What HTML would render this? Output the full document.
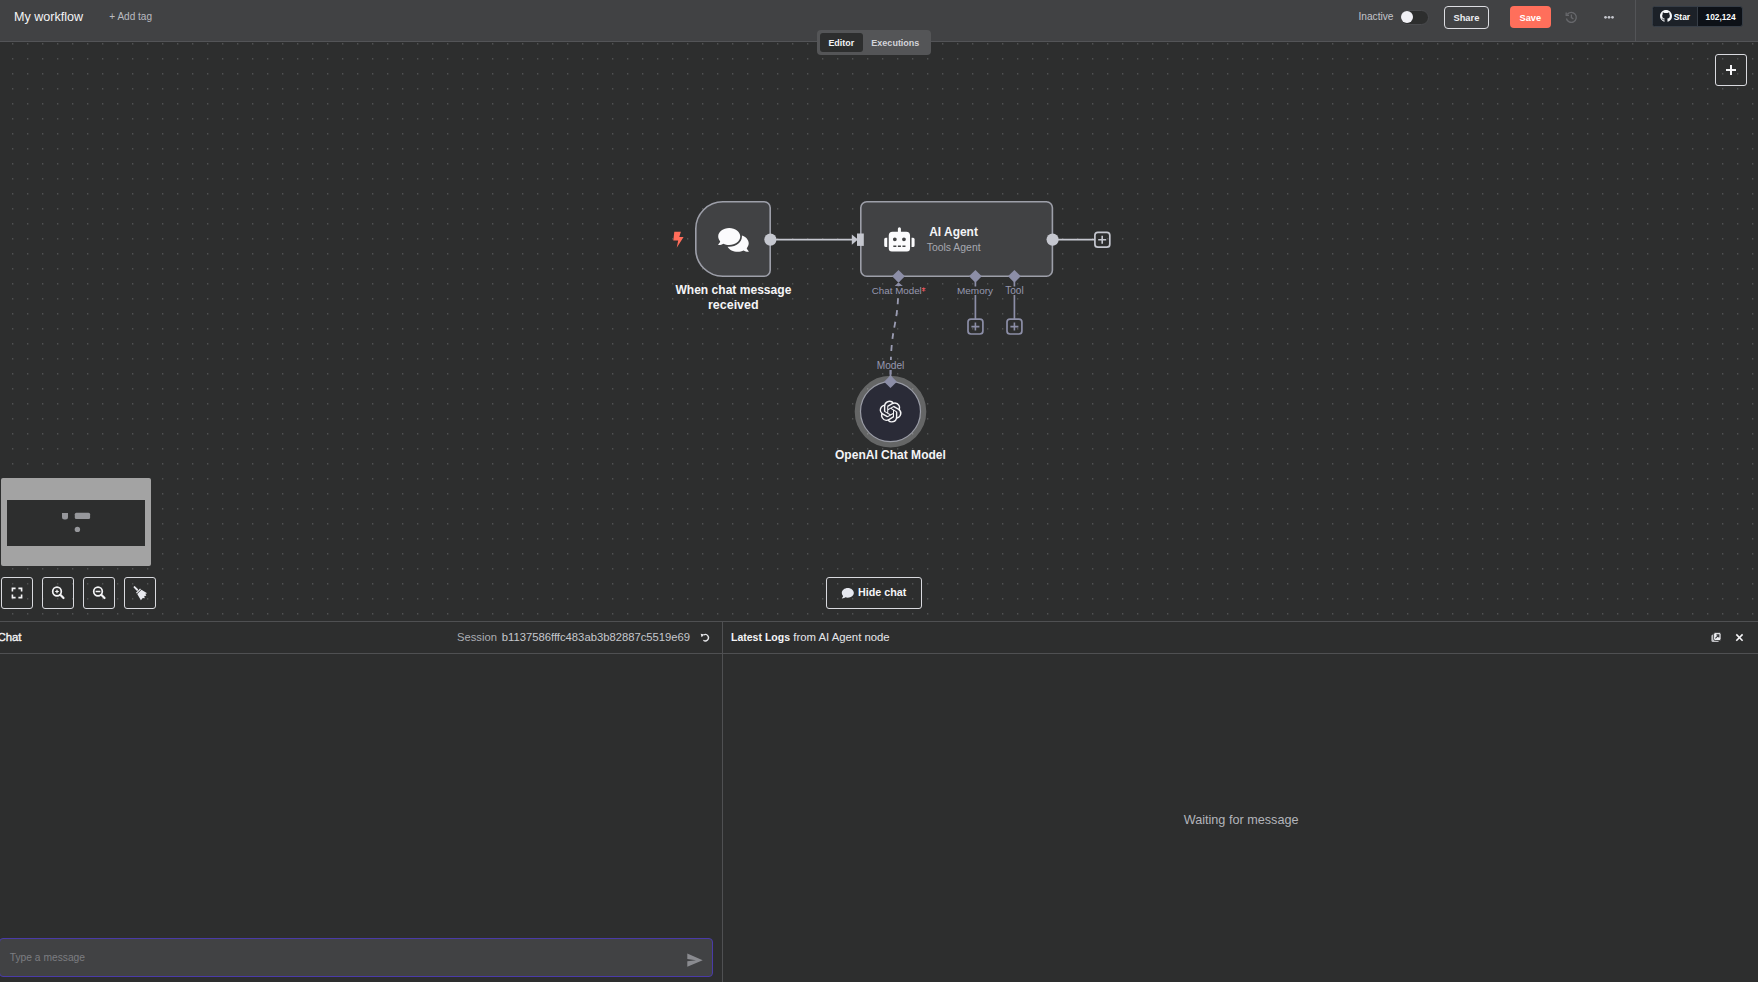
<!DOCTYPE html><html><head><meta charset="utf-8"><style>
html,body{margin:0;padding:0}
body{width:1758px;height:982px;overflow:hidden;position:relative;background:#2d2e2e;font-family:"Liberation Sans",sans-serif}
.t{position:absolute;white-space:pre}
.abs{position:absolute}
</style></head><body>
<svg class="abs" style="left:0;top:0" width="1758" height="982" viewBox="0 0 1758 982">
<defs><pattern id="dots" x="12" y="13" width="15" height="15" patternUnits="userSpaceOnUse"><rect x="0.05" y="0.2" width="1.25" height="1.25" fill="#5b5c5d"/></pattern></defs>
<rect x="0" y="42" width="1758" height="580" fill="url(#dots)"/>
<path d="M722.8,201.8 H764.2 A6,6 0 0 1 770.2,207.8 V270.2 A6,6 0 0 1 764.2,276.2 H722.8 A27,27 0 0 1 695.8,249.2 V228.8 A27,27 0 0 1 722.8,201.8 Z" fill="#414244" stroke="#9d9fa9" stroke-width="1.6"/>
<rect x="860.8" y="201.8" width="191.6" height="74.4" rx="6" ry="6" fill="#414244" stroke="#9d9fa9" stroke-width="1.6"/>
<line x1="776" y1="239.6" x2="853" y2="239.6" stroke="#c5c7cf" stroke-width="1.8"/>
<path d="M851.8,234.4 L858,239.6 L851.8,244.8 Z" fill="#c5c7cf"/>
<rect x="857" y="233.5" width="6.8" height="12.4" fill="#c5c7cf"/>
<circle cx="770.4" cy="239.6" r="6.1" fill="#c5c7cf"/>
<circle cx="1052.6" cy="239.6" r="6.1" fill="#c5c7cf"/>
<line x1="1058" y1="239.6" x2="1095" y2="239.6" stroke="#c5c7cf" stroke-width="1.8"/>
<rect x="1094.9" y="232.3" width="14.9" height="14.9" rx="3" fill="none" stroke="#c5c7cf" stroke-width="1.7"/>
<path d="M1098.2,239.7 H1106.2 M1102.2,235.7 V243.7" stroke="#c5c7cf" stroke-width="1.6"/>
<path d="M898.5,269.90000000000003 L904.9,276.3 L898.5,282.7 L892.1,276.3 Z" fill="#8c8ea7"/>
<path d="M975.4,269.90000000000003 L981.8,276.3 L975.4,282.7 L969.0,276.3 Z" fill="#8c8ea7"/>
<path d="M1014.4,269.90000000000003 L1020.8,276.3 L1014.4,282.7 L1008.0,276.3 Z" fill="#8c8ea7"/>
<path d="M894.6,286 L898.6,282.4 L902.8,286 Z" fill="#8c8ea7"/>
<line x1="975.4" y1="282" x2="975.4" y2="286.5" stroke="#8c8ea7" stroke-width="1.7"/>
<line x1="975.4" y1="295" x2="975.4" y2="319" stroke="#8c8ea7" stroke-width="1.7"/>
<rect x="968.0" y="319.1" width="14.9" height="14.9" rx="3" fill="none" stroke="#8c8ea7" stroke-width="1.7"/>
<path d="M971.4,326.6 H979.4 M975.4,322.6 V330.6" stroke="#8c8ea7" stroke-width="1.6"/>
<line x1="1014.4" y1="282" x2="1014.4" y2="286.5" stroke="#8c8ea7" stroke-width="1.7"/>
<line x1="1014.4" y1="295" x2="1014.4" y2="319" stroke="#8c8ea7" stroke-width="1.7"/>
<rect x="1007.0" y="319.1" width="14.9" height="14.9" rx="3" fill="none" stroke="#8c8ea7" stroke-width="1.7"/>
<path d="M1010.4,326.6 H1018.4 M1014.4,322.6 V330.6" stroke="#8c8ea7" stroke-width="1.6"/>
<path d="M898.4,283 C898.4,330 890.6,320 890.6,376" fill="none" stroke="#9a9cb2" stroke-width="1.8" stroke-dasharray="6 5.8" stroke-dashoffset="-3.5"/>
<rect x="868" y="287" width="60" height="9.5" fill="#2d2e2e"/>
<rect x="874" y="360" width="33" height="10" fill="#2d2e2e"/>
<line x1="890.5" y1="370" x2="890.5" y2="377" stroke="#8c8ea7" stroke-width="1.7"/>
<circle cx="890.5" cy="411.6" r="32.9" fill="none" stroke="rgba(255,255,255,0.27)" stroke-width="5.8"/>
<circle cx="890.5" cy="411.6" r="30" fill="#2a2b37" stroke="#9a9ca6" stroke-width="1.2"/>
<path d="M890.5,375.3 L896.9,381.7 L890.5,388.1 L884.1,381.7 Z" fill="#8c8ea7"/>
<g transform="translate(879.6,400.6) scale(0.917)" fill="#f4f4f6"><path d="M22.2819 9.8211a5.9847 5.9847 0 0 0-.5157-4.9108 6.0462 6.0462 0 0 0-6.5098-2.9A6.0651 6.0651 0 0 0 4.9807 4.1818a5.9847 5.9847 0 0 0-3.9977 2.9 6.0462 6.0462 0 0 0 .7427 7.0966 5.98 5.98 0 0 0 .511 4.9107 6.051 6.051 0 0 0 6.5146 2.9001A5.9847 5.9847 0 0 0 13.2599 24a6.0557 6.0557 0 0 0 5.7718-4.2058 5.9894 5.9894 0 0 0 3.9977-2.9001 6.0557 6.0557 0 0 0-.7475-7.0729zm-9.022 12.6081a4.4755 4.4755 0 0 1-2.8764-1.0408l.1419-.0804 4.7783-2.7582a.7948.7948 0 0 0 .3927-.6813v-6.7369l2.02 1.1686a.071.071 0 0 1 .038.052v5.5826a4.504 4.504 0 0 1-4.4945 4.4944zm-9.6607-4.1254a4.4708 4.4708 0 0 1-.5346-3.0137l.142.0852 4.783 2.7582a.7712.7712 0 0 0 .7806 0l5.8428-3.3685v2.3324a.0804.0804 0 0 1-.0332.0615L9.74 19.9502a4.4992 4.4992 0 0 1-6.1408-1.6464zM2.3408 7.8956a4.485 4.485 0 0 1 2.3655-1.9728V11.6a.7664.7664 0 0 0 .3879.6765l5.8144 3.3543-2.0201 1.1685a.0757.0757 0 0 1-.071 0l-4.8303-2.7865A4.504 4.504 0 0 1 2.3408 7.872zm16.5963 3.8558L13.1038 8.364 15.1192 7.2a.0757.0757 0 0 1 .071 0l4.8303 2.7913a4.4944 4.4944 0 0 1-.6765 8.1042v-5.6772a.79.79 0 0 0-.407-.667zm2.0107-3.0231l-.142-.0852-4.7735-2.7818a.7759.7759 0 0 0-.7854 0L9.409 9.2297V6.8974a.0662.0662 0 0 1 .0284-.0615l4.8303-2.7866a4.4992 4.4992 0 0 1 6.6802 4.66zM8.3065 12.863l-2.02-1.1638a.0804.0804 0 0 1-.038-.0567V6.0742a4.4992 4.4992 0 0 1 7.3757-3.4537l-.142.0805L8.704 5.459a.7948.7948 0 0 0-.3927.6813zm1.0976-2.3654l2.602-1.4998 2.6069 1.4998v2.9994l-2.5974 1.4997-2.6067-1.4997Z"/></g>
<path d="M674.3,231.7 L680.9,231.7 L679.3,237 L683.6,237 L676.7,247.8 L678.2,240.6 L673.3,240.6 Z" fill="#ff6d5a"/>
<g transform="translate(718.2,226.4) scale(0.053)" fill="#fbfbfd"><path d="M416 192c0-88.4-93.1-160-208-160S0 103.6 0 192c0 34.3 14.1 65.9 38 92-13.4 30.2-35.5 54.2-35.8 54.5-2.2 2.3-2.8 5.7-1.5 8.7S4.8 352 8 352c36.6 0 66.9-12.3 88.7-25 32.2 15.7 70.3 25 111.3 25 114.9 0 208-71.6 208-160zm122 220c23.9-26 38-57.7 38-92 0-66.9-53.5-124.2-129.3-148.1.9 6.6 1.3 13.3 1.3 20.1 0 105.9-107.7 192-240 192-10.8 0-21.3-.8-31.7-1.9C207.8 439.6 281.8 480 368 480c41 0 79.1-9.2 111.3-25 21.8 12.7 52.1 25 88.7 25 3.2 0 6.1-1.9 7.3-4.8 1.3-2.9.7-6.3-1.5-8.7-.3-.3-22.4-24.2-35.8-54.5z"/></g>
<g transform="translate(884.2,227.2) scale(0.0475)" fill="#fbfbfd"><path d="M32,224H64V416H32A31.96166,31.96166,0,0,1,0,384V256A31.96166,31.96166,0,0,1,32,224Zm512-48V448a64.06328,64.06328,0,0,1-64,64H160a64.06328,64.06328,0,0,1-64-64V176a79.974,79.974,0,0,1,80-80H288V32a32,32,0,0,1,64,0V96H464A79.974,79.974,0,0,1,544,176ZM264,256a40,40,0,1,0-40,40A39.997,39.997,0,0,0,264,256Zm-8,128H192v32h64Zm96,0H288v32h64ZM456,256a40,40,0,1,0-40,40A39.997,39.997,0,0,0,456,256Zm-8,128H384v32h64ZM640,256V384a31.96166,31.96166,0,0,1-32,32H576V224h32A31.96166,31.96166,0,0,1,640,256Z"/></g>
</svg>
<div class="t" style="left:675.40px;top:283.58px;font-size:12.07px;line-height:12.07px;font-weight:700;color:#f4f4f6;">When chat message</div>
<div class="t" style="left:707.92px;top:298.61px;font-size:12.50px;line-height:12.50px;font-weight:700;color:#f4f4f6;">received</div>
<div class="t" style="left:929.24px;top:226.60px;font-size:11.94px;line-height:11.94px;font-weight:700;color:#f4f4f6;">AI Agent</div>
<div class="t" style="left:926.69px;top:242.98px;font-size:10.43px;line-height:10.43px;font-weight:400;color:#a6a8b0;">Tools Agent</div>
<div class="t" style="left:871.81px;top:285.64px;font-size:9.78px;line-height:9.78px;font-weight:400;color:#9698ae;">Chat Model</div>
<svg class="abs" style="left:920px;top:285px" width="8" height="8"><path d="M3.7,2.4 V6.4 M2,3.4 L5.4,5.4 M5.4,3.4 L2,5.4" stroke="#f2545b" stroke-width="1.1"/></svg>
<div class="t" style="left:957.00px;top:286.47px;font-size:9.97px;line-height:9.97px;font-weight:400;color:#9698ae;">Memory</div>
<div class="t" style="left:1005.20px;top:286.40px;font-size:10.06px;line-height:10.06px;font-weight:400;color:#9698ae;">Tool</div>
<div class="t" style="left:876.69px;top:361.42px;font-size:10.16px;line-height:10.16px;font-weight:400;color:#9698ae;">Model</div>
<div class="t" style="left:835.02px;top:449.42px;font-size:12.02px;line-height:12.02px;font-weight:700;color:#f4f4f6;">OpenAI Chat Model</div>
<div class="abs" style="left:1715px;top:54px;width:32px;height:32px;box-sizing:border-box;border:1.5px solid #d9dadf;border-radius:3px"></div>
<svg class="abs" style="left:1715px;top:54px" width="32" height="32"><path d="M11,16 H21 M16,11 V21" stroke="#f4f4f6" stroke-width="2"/></svg>
<div class="abs" style="left:1px;top:478px;width:150px;height:88px;background:#a3a3a3;border-radius:2px"></div>
<div class="abs" style="left:7px;top:500px;width:138px;height:46px;background:#2d2e2e"></div>
<svg class="abs" style="left:0;top:470px" width="160" height="80"><path d="M62,43 H68 V47 A2.5,2.5 0 0 1 65.5,49.5 H64.5 A2.5,2.5 0 0 1 62,47 Z" fill="#96979b"/><rect x="74.8" y="42.8" width="15.3" height="6.2" rx="1.5" fill="#96979b"/><circle cx="77.4" cy="59.4" r="2.7" fill="#96979b"/></svg>
<div class="abs" style="left:1px;top:577px;width:32px;height:32px;box-sizing:border-box;border:1.5px solid #d9dadf;border-radius:3px"></div>
<div class="abs" style="left:42px;top:577px;width:32px;height:32px;box-sizing:border-box;border:1.5px solid #d9dadf;border-radius:3px"></div>
<div class="abs" style="left:83px;top:577px;width:32px;height:32px;box-sizing:border-box;border:1.5px solid #d9dadf;border-radius:3px"></div>
<div class="abs" style="left:124px;top:577px;width:32px;height:32px;box-sizing:border-box;border:1.5px solid #d9dadf;border-radius:3px"></div>
<svg class="abs" style="left:0;top:570px" width="170" height="45" fill="none" stroke="#f4f4f6">
<path d="M12.4,21.6 V18.4 H15.6 M18.4,18.4 H21.6 V21.6 M21.6,24.4 V27.6 H18.4 M15.6,27.6 H12.4 V24.4" stroke-width="1.6"/>
<circle cx="57" cy="21.5" r="4.3" stroke-width="1.7"/><path d="M60.3,24.8 L63.5,28" stroke-width="2.2" stroke-linecap="round"/><path d="M55.2,21.5 H58.8 M57,19.7 V23.3" stroke-width="1.2"/>
<circle cx="98" cy="21.5" r="4.3" stroke-width="1.7"/><path d="M101.3,24.8 L104.5,28" stroke-width="2.2" stroke-linecap="round"/><path d="M95.6,21.5 H100.4" stroke-width="1.5"/>
<g transform="translate(140.2,22.8) rotate(-45)" fill="#e8e9ee" stroke="none"><rect x="-0.95" y="-9" width="1.9" height="5.6" rx="0.95"/><rect x="-2.9" y="-3.1" width="5.8" height="1.3"/><path d="M-3,-1.2 L3,-1.2 L4.6,5.2 L3,4.4 L2.2,6.4 L0.6,5.2 L-0.6,7 L-1.8,5.4 L-4.8,5.8 Z"/></g>
</svg>
<div class="abs" style="left:826px;top:577px;width:96px;height:32px;box-sizing:border-box;border:1.5px solid #d9dadf;border-radius:3px"></div>
<svg class="abs" style="left:840px;top:585px" width="16" height="16"><g transform="translate(1.8,2.2) scale(0.0235)" fill="#e6e8ef"><path d="M256 32C114.6 32 0 125.1 0 240c0 49.6 21.4 95 57 130.7C44.5 421.1 2.7 466 2.2 466.5c-2.2 2.3-2.8 5.7-1.5 8.7S4.8 480 8 480c66.3 0 116-31.8 140.6-51.4 32.7 12.3 69 19.4 107.4 19.4 141.4 0 256-93.1 256-208S397.4 32 256 32z"/></g></svg>
<div class="t" style="left:857.95px;top:587.11px;font-size:10.75px;line-height:10.75px;font-weight:700;color:#f4f4f6;">Hide chat</div>
<div class="abs" style="left:0;top:0;width:1758px;height:41px;background:#414244"></div>
<div class="abs" style="left:0;top:41px;width:1758px;height:1px;background:#535457"></div>
<div class="abs" style="left:1635px;top:0;width:1px;height:41px;background:#535457"></div>
<div class="t" style="left:14.00px;top:11.07px;font-size:12.55px;line-height:12.55px;font-weight:400;color:#f4f4f6;">My workflow</div>
<div class="t" style="left:109.30px;top:12.21px;font-size:10.05px;line-height:10.05px;font-weight:400;color:#b9bbc1;">+ Add tag</div>
<div class="t" style="left:1358.48px;top:12.30px;font-size:10.18px;line-height:10.18px;font-weight:400;color:#c3c5cb;">Inactive</div>
<div class="abs" style="left:1399.5px;top:10px;width:29px;height:14.8px;box-sizing:border-box;border-radius:8px;background:#2d2e2e;border:1px solid #4a4b4e"></div>
<div class="abs" style="left:1401px;top:11.2px;width:12.2px;height:12.2px;border-radius:50%;background:#f1f1f6"></div>
<div class="abs" style="left:1444px;top:6px;width:45px;height:23px;box-sizing:border-box;border:1.5px solid #dcdde2;border-radius:4px"></div>
<div class="t" style="left:1453.42px;top:13.92px;font-size:9.34px;line-height:9.34px;font-weight:700;color:#eceef2;">Share</div>
<div class="abs" style="left:1510px;top:6px;width:41px;height:22px;background:#ff6f5b;border-radius:4px"></div>
<div class="t" style="left:1519.52px;top:13.99px;font-size:9.25px;line-height:9.25px;font-weight:700;color:#ffffff;">Save</div>
<svg class="abs" style="left:1564px;top:10px" width="14" height="14" fill="none" stroke="#67686c" stroke-width="1.3"><path d="M3.2,4.5 A5,5 0 1 1 2.4,8.5"/><path d="M2.2,2.6 V5.4 H5" /><path d="M7.4,4.6 V7.6 L9.4,9"/></svg>
<svg class="abs" style="left:1600px;top:13px" width="18" height="9"><circle cx="5.5" cy="4.3" r="1.35" fill="#c5c7ce"/><circle cx="9" cy="4.3" r="1.35" fill="#c5c7ce"/><circle cx="12.5" cy="4.3" r="1.35" fill="#c5c7ce"/></svg>
<div class="abs" style="left:1652px;top:6px;width:91px;height:20.5px;box-sizing:border-box;background:#0d1117;border-radius:3px;border:1px solid #363d46"></div>
<div class="abs" style="left:1653px;top:7px;width:44.3px;height:18.5px;background:#1c2128;border-radius:2px 0 0 2px"></div>
<div class="abs" style="left:1697.3px;top:6px;width:1px;height:20.5px;background:#363d46"></div>
<svg class="abs" style="left:1660px;top:9.8px" width="12" height="12"><g transform="scale(0.75)" fill="#f6f8fa"><path d="M8 0C3.58 0 0 3.580 0 8c0 3.54 2.29 6.53 5.47 7.59.4.07.55-.17.55-.38 0-.19-.01-.82-.01-1.49-2.01.37-2.53-.49-2.69-.94-.09-.23-.48-.94-.82-1.13-.28-.15-.68-.52-.01-.53.63-.01 1.08.58 1.23.82.72 1.21 1.87.87 2.33.66.07-.52.28-.87.51-1.07-1.78-.2-3.64-.89-3.64-3.95 0-.87.31-1.59.82-2.15-.08-.2-.36-1.02.08-2.12 0 0 .67-.21 2.2.82.64-.18 1.32-.27 2-.27.68 0 1.36.09 2 .27 1.53-1.04 2.2-.82 2.2-.82.44 1.1.16 1.92.08 2.12.51.56.82 1.27.82 2.15 0 3.07-1.87 3.75-3.65 3.95.29.25.54.73.54 1.48 0 1.07-.01 1.93-.01 2.2 0 .21.15.46.55.38A8.013 8.013 0 0016 8c0-4.42-3.58-8-8-8z"/></g></svg>
<div class="t" style="left:1673.75px;top:12.80px;font-size:8.42px;line-height:8.42px;font-weight:700;color:#ffffff;">Star</div>
<div class="t" style="left:1705.50px;top:12.87px;font-size:8.34px;line-height:8.34px;font-weight:700;color:#ffffff;">102,124</div>
<div class="abs" style="left:817px;top:30px;width:114px;height:25px;background:#545557;border-radius:4px"></div>
<div class="abs" style="left:820px;top:33px;width:43px;height:19px;background:#2d2e2e;border-radius:3px"></div>
<div class="t" style="left:828.38px;top:39.37px;font-size:8.93px;line-height:8.93px;font-weight:700;color:#f4f4f6;">Editor</div>
<div class="t" style="left:871.37px;top:39.30px;font-size:9.00px;line-height:9.00px;font-weight:700;color:#d3d4d9;">Executions</div>
<div class="abs" style="left:0;top:621px;width:1758px;height:361px;background:#2d2e2e"></div>
<div class="abs" style="left:0;top:621px;width:1758px;height:1px;background:#4f5052"></div>
<div class="abs" style="left:0;top:653px;width:1758px;height:1px;background:#4f5052"></div>
<div class="abs" style="left:722px;top:621px;width:1px;height:361px;background:#4f5052"></div>
<div class="t" style="left:-2.6px;top:632.2px;font-size:11.4px;line-height:11.4px;font-weight:400;color:#f4f4f6;-webkit-text-stroke:0.35px #f4f4f6">Chat</div>
<div class="t" style="left:457.04px;top:631.61px;font-size:11.22px;line-height:11.22px;font-weight:400;color:#abadb3;">Session</div>
<div class="t" style="left:501.81px;top:631.57px;font-size:11.26px;line-height:11.26px;font-weight:400;color:#c6c8cd;">b1137586fffc483ab3b82887c5519e69</div>
<svg class="abs" style="left:699px;top:632px" width="12" height="12"><path d="M4.9,2.8 A3.2,3.2 0 1 1 4.4,8.3" fill="none" stroke="#e6e7ea" stroke-width="1.35"/><path d="M1.7,1.7 L5.4,2.6 L2.6,5.3 Z" fill="#e6e7ea"/></svg>
<div class="t" style="left:731.01px;top:632.21px;font-size:10.52px;line-height:10.52px;font-weight:700;color:#f4f4f6;">Latest Logs</div>
<div class="t" style="left:793.29px;top:632.01px;font-size:11.34px;line-height:11.34px;font-weight:400;color:#e6e7ea;">from AI Agent node</div>
<svg class="abs" style="left:1709px;top:630px" width="40" height="16"><rect x="2.4" y="4.4" width="7.6" height="7.6" rx="1.6" fill="#bfc0c4"/><rect x="4.6" y="2.6" width="7.4" height="7.9" rx="1.6" fill="#eeeff2" stroke="#2d2e2e" stroke-width="0.8"/><path d="M6.4,8.4 L9.6,5.2 M7.4,4.9 H9.9 V7.4" fill="none" stroke="#3a3b3e" stroke-width="1.1"/><path d="M27.3,4.4 L33.6,10.7 M33.6,4.4 L27.3,10.7" stroke="#f4f4f6" stroke-width="1.6"/></svg>
<div class="t" style="left:1183.67px;top:813.97px;font-size:12.67px;line-height:12.67px;font-weight:400;color:#b3b5bb;">Waiting for message</div>
<div class="abs" style="left:-1px;top:938px;width:714px;height:39px;box-sizing:border-box;background:#414244;border:1px solid #4a3ba8;border-radius:4px"></div>
<div class="t" style="left:9.79px;top:952.93px;font-size:10.26px;line-height:10.26px;font-weight:400;color:#7c7d81;">Type a message</div>
<svg class="abs" style="left:686px;top:952px" width="18" height="16"><path d="M1.3,1.4 L16.7,8.2 L1.3,14.8 L1.3,9.3 L10,8.2 L1.3,7.1 Z" fill="#8a8b90"/></svg>
</body></html>
